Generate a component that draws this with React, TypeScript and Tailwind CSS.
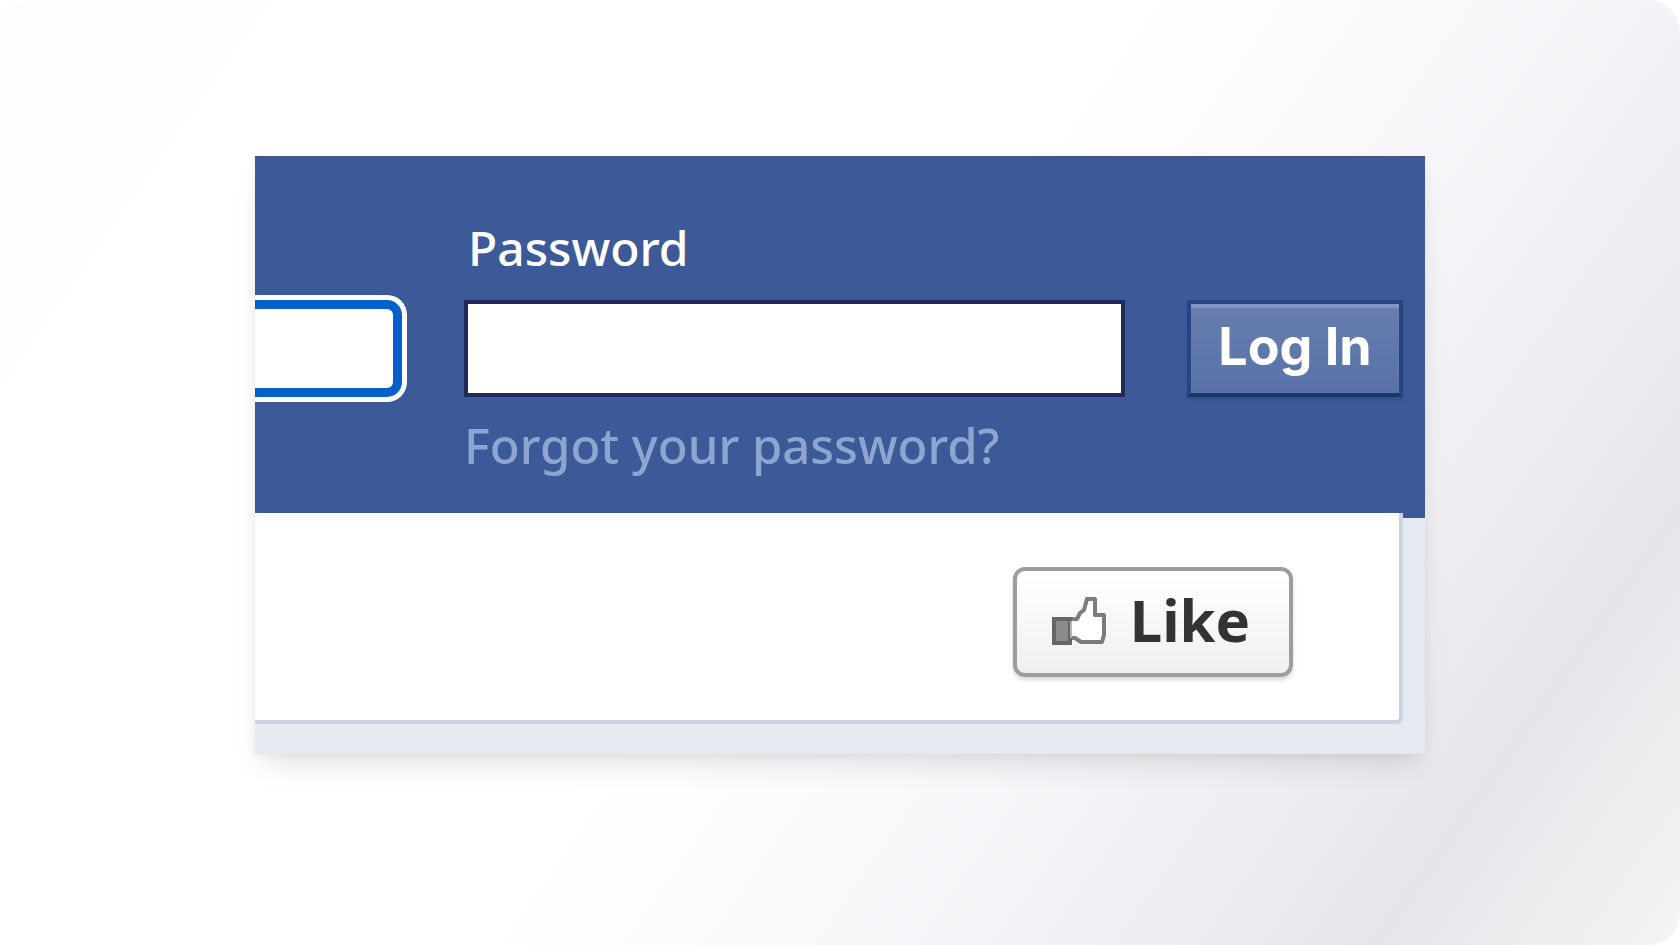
function ThumbIcon() {
  return (
    <svg viewBox="0 0 54 50" className="h-[50px] w-[54px] shrink-0" aria-hidden="true">
      <path
        d="M17 24h8l3-6 4-3 3-11h8v16h9v20l-2 7H29l-6-4h-6z"
        fill="#fff"
        stroke="#7c7c7c"
        strokeWidth="4"
        strokeLinejoin="round"
      />
      <path d="M2 24h16v24H2z" fill="#8c8c8c" stroke="#666" strokeWidth="4" />
      <path d="M19 26v17" stroke="#b5b5b5" strokeWidth="2" />
    </svg>
  );
}

function LoginBar() {
  return (
    <form
      className="grid grid-cols-[147px_minmax(0,1fr)_216px] gap-x-[62px] border-t-2 border-[#46567f] bg-[#3c5998] pt-[60px] pr-[22px] pb-[43px]"
      onSubmit={(event) => event.preventDefault()}
    >
      <label
        htmlFor="password"
        className="col-start-2 mb-[22px] pl-1 font-['Noto_Sans',sans-serif] text-[48px] leading-[60px] font-medium text-white"
      >
        Password
      </label>
      <input
        type="text"
        aria-label="Email"
        className="col-start-1 row-start-2 h-[97px] w-full rounded-r-[15px] border-y-[9px] border-r-[9px] border-[#0560cc] bg-white px-4 text-[40px] shadow-[0_0_0_5px_#fff] outline-none"
      />
      <input
        id="password"
        type="password"
        className="col-start-2 row-start-2 h-[97px] w-full border-4 border-[#1d2a5b] bg-white px-4 text-[40px] outline-none"
      />
      <button
        type="submit"
        className="col-start-3 row-start-2 h-[97px] border-4 border-[#29447e] border-b-[#1a356e] bg-linear-to-b from-[#677eae] to-[#5872a8] pb-1 font-['Inter',sans-serif] text-[52px] leading-[60px] font-bold text-white shadow-[inset_0_4px_1px_#8199c4,0_3px_2px_#34508d]"
      >
        Log In
      </button>
      <a
        href="#"
        className="col-start-2 mt-[18px] justify-self-start font-['Noto_Sans',sans-serif] text-[49px] leading-[60px] font-medium whitespace-nowrap text-[#8fa5d1]"
      >
        Forgot your password?
      </a>
    </form>
  );
}

export default function App() {
  return (
    <main className="min-h-screen rounded-[32px] bg-[linear-gradient(125deg,#fbfefb_0%,#fff_20%,#fff_48%,#f9f9fc_62%,#f0eff3_75%,#e6e5ea_87%,#f4f4f4_100%)] px-[255px] pt-[156px] pb-20">
      <div className="shadow-[0_16px_28px_-8px_rgba(0,0,0,0.12),0_2px_10px_rgba(0,0,0,0.04)]">
        <div className="overflow-hidden bg-[#e6eaf0]">
          <LoginBar />
          <section className="-mt-[5px] mr-[22px] mb-[30px] flex justify-end rounded-br-md border-r-4 border-b-4 border-[#ccd2e1] bg-white pt-[54px] pr-[106px] pb-[43px]">
            <button
              type="button"
              className="flex h-[110px] w-[280px] items-center justify-center gap-6 rounded-xl border-4 border-[#9d9d9d] bg-linear-to-b from-white to-[#f0f0f1] pr-1 pb-1 font-['Noto_Sans',sans-serif] text-[58px] leading-[72px] font-bold text-[#333] shadow-[0_3px_4px_rgba(0,0,0,0.15)]"
            >
              <ThumbIcon />
              Like
            </button>
          </section>
        </div>
      </div>
    </main>
  );
}
